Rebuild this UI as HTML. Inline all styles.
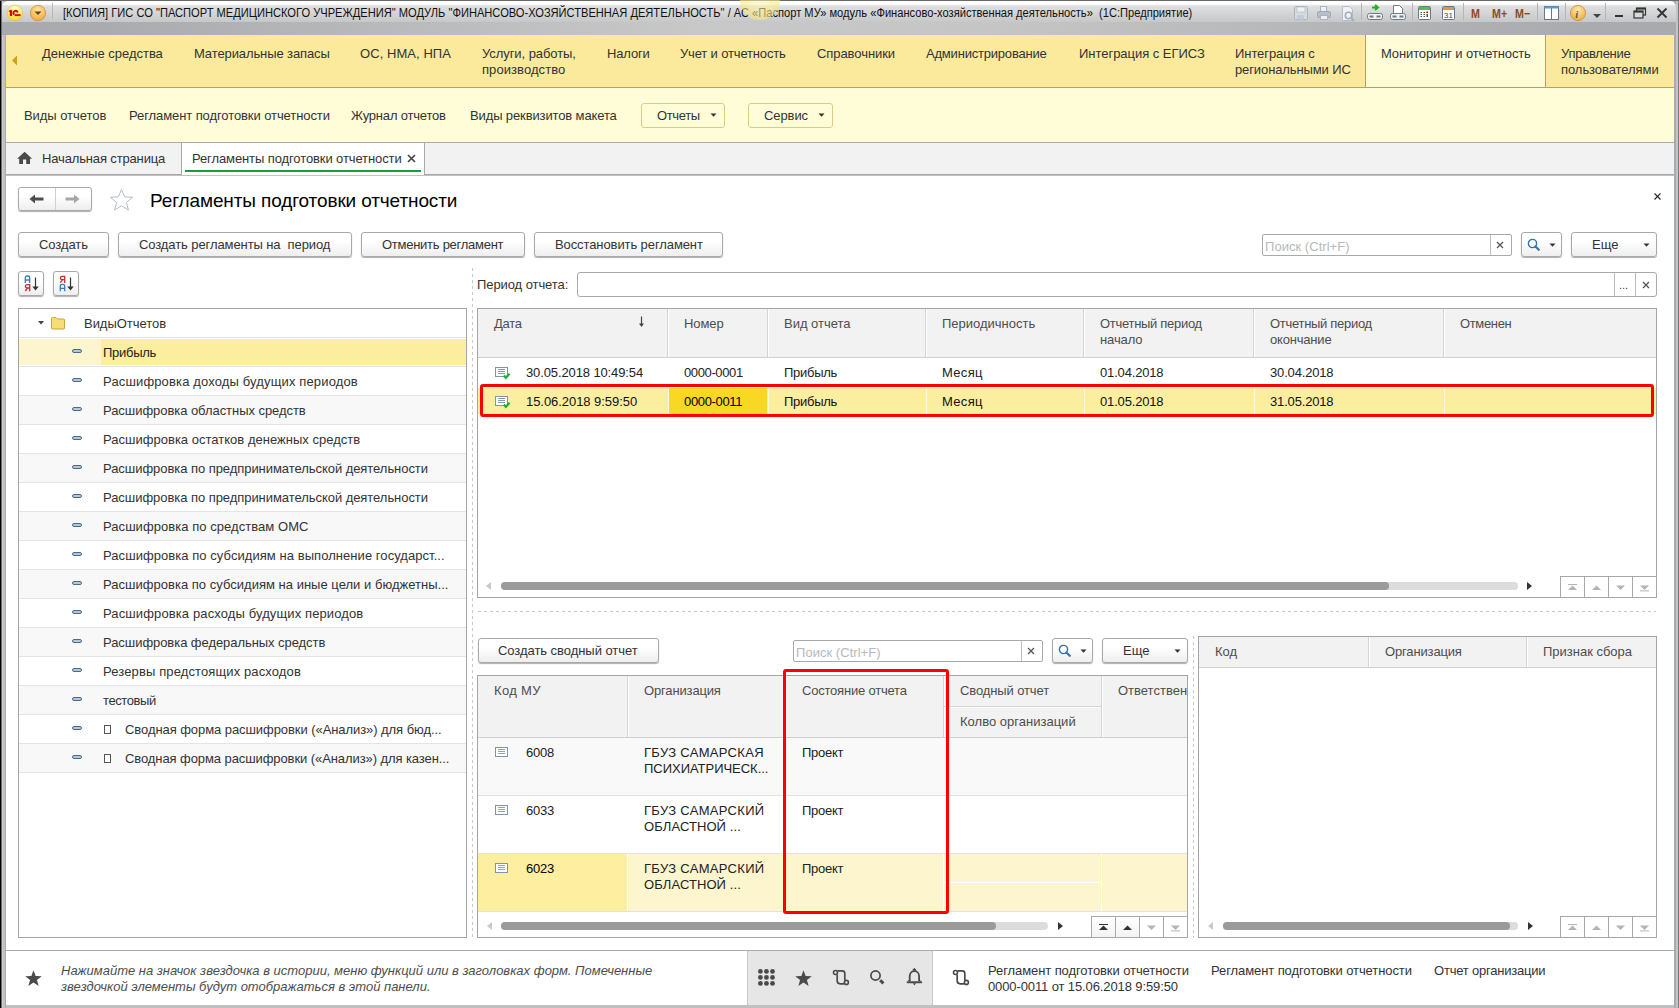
<!DOCTYPE html><html><head><meta charset="utf-8"><title>1C</title><style>
*{margin:0;padding:0;box-sizing:border-box}
html,body{width:1679px;height:1008px;overflow:hidden;background:#fff;font-family:"Liberation Sans",sans-serif}
.t{position:absolute;white-space:nowrap}
.btn{position:absolute;border:1px solid #a9a9a9;border-radius:3px;background:linear-gradient(#fff 35%,#eeeeee);box-shadow:0 1px 1px rgba(0,0,0,.32)}
.hdr{position:absolute;background:#f2f2f2}
svg{position:absolute}
</style></head><body>
<div style="position:absolute;left:0px;top:0px;width:1679px;height:1008px;background:#bfc0c2"></div>
<div style="position:absolute;left:0px;top:0px;width:1px;height:1008px;background:#000"></div>
<div style="position:absolute;left:1px;top:0px;width:1px;height:1008px;background:#6e6e6e"></div>
<div style="position:absolute;left:2px;top:0px;width:1px;height:1008px;background:#cdcdcd"></div>
<div style="position:absolute;left:5px;top:0px;width:1px;height:1008px;background:#acacac"></div>
<div style="position:absolute;left:1674px;top:0px;width:2px;height:1008px;background:#a9aaac"></div>
<div style="position:absolute;left:1676px;top:0px;width:2px;height:1008px;background:#c3c4c5"></div>
<div style="position:absolute;left:1678px;top:0px;width:1px;height:1008px;background:#7b7b7b"></div>
<div style="position:absolute;left:0px;top:0px;width:1679px;height:1px;background:#6b6b6b"></div>
<div style="position:absolute;left:2px;top:1px;width:1674px;height:21px;background:linear-gradient(#ffffff 0px,#ffffff 3px,#dfe0e1 5px,#c6c7c9 21px);border-radius:6px 6px 0 0"></div>
<div style="position:absolute;left:2px;top:22px;width:1674px;height:13px;background:linear-gradient(90deg,#a9aaad 0px,#aaabae 100px,#b9babc 400px,#c8c8c8 700px,#c5c5c5 1000px,#b6b7b9 1300px,#aaabae 1580px,#a9aaad 1679px)"></div>
<svg style="left:4px;top:2px" width="24" height="22" viewBox="0 0 24 22"><defs><radialGradient id="g1" cx="50%" cy="25%" r="75%"><stop offset="0" stop-color="#fffbd0"/><stop offset="0.6" stop-color="#fff07a"/><stop offset="1" stop-color="#ffd800"/></radialGradient></defs><circle cx="10.9" cy="10.9" r="7.7" fill="url(#g1)" stroke="#d8c060" stroke-width="0.6"/><path d="M7 8.3V14" stroke="#e00000" stroke-width="2.4"/><path d="M5 9.6L7.6 8.1" stroke="#e00000" stroke-width="1.4"/><path d="M13.6 10.4A2.1 2.1 0 1 0 10.3 12.6" fill="none" stroke="#e00000" stroke-width="1.9"/><rect x="10.6" y="12.2" width="6" height="1.9" fill="#e00000"/></svg>
<svg style="left:29px;top:4px" width="20" height="20" viewBox="0 0 20 20"><defs><radialGradient id="g2" cx="50%" cy="30%" r="70%"><stop offset="0" stop-color="#ffe3a0"/><stop offset="1" stop-color="#f5a93a"/></radialGradient></defs><circle cx="9" cy="9" r="7.7" fill="url(#g2)" stroke="#c98a2a" stroke-width="0.7"/><path d="M5.5 7.5 h7 l-3.5 3.5z" fill="#5a4520"/></svg>
<div style="position:absolute;left:52px;top:3px;width:1px;height:16px;background:#b8b8b8"></div>
<div class="t" style="left:63px;top:7px;font-size:12px;line-height:12px;color:#111;transform:scaleX(0.9267);transform-origin:0 0">[КОПИЯ] ГИС СО "ПАСПОРТ МЕДИЦИНСКОГО УЧРЕЖДЕНИЯ" МОДУЛЬ "ФИНАНСОВО-ХОЗЯЙСТВЕННАЯ ДЕЯТЕЛЬНОСТЬ" / АС «Паспорт МУ» модуль «Финансово-хозяйственная деятельность»&nbsp; (1С:Предприятие)</div>
<svg style="left:1293px;top:5px" width="16" height="16" viewBox="0 0 16 16"><rect x="1.5" y="1.5" width="13" height="13" rx="1" fill="#d6dbe2" stroke="#aab4bf"/><rect x="4" y="2" width="8" height="5" fill="#eef1f4" stroke="#aab4bf" stroke-width=".6"/><rect x="4" y="10" width="7" height="4.5" fill="#c4ccd5"/></svg>
<svg style="left:1316px;top:5px" width="16" height="16" viewBox="0 0 16 16"><rect x="4.5" y="1.5" width="6" height="5" fill="#eef0f3" stroke="#aab4bf"/><rect x="1.5" y="6.5" width="13" height="6" rx="1.5" fill="#b7c0ca" stroke="#9ea9b5"/><rect x="4.5" y="10.5" width="7" height="4" fill="#eef0f3" stroke="#aab4bf"/></svg>
<svg style="left:1340px;top:5px" width="16" height="18" viewBox="0 0 16 18"><path d="M2.5 1.5h7l3 3v11h-10z" fill="#f0f2f5" stroke="#b3bcc6"/><circle cx="8.5" cy="10.5" r="3.2" fill="none" stroke="#a4aeb9" stroke-width="1.6"/><path d="M11 13l3 3" stroke="#a4aeb9" stroke-width="1.8"/></svg>
<svg style="left:1366px;top:4px" width="18" height="17" viewBox="0 0 18 17"><path d="M6 3.5h5 M9 1l3 2.5-3 2.5" stroke="#1fb31f" stroke-width="2" fill="none"/><rect x="1.5" y="9.5" width="15" height="6" rx="2" fill="#f2f2f2" stroke="#707a85"/><rect x="3.5" y="11.5" width="4" height="2" fill="#707a85"/><rect x="10.5" y="11.5" width="4" height="2" fill="#707a85"/></svg>
<svg style="left:1389px;top:4px" width="18" height="17" viewBox="0 0 18 17"><path d="M4.5 1.5h6l3 3v5h-9z" fill="#fff" stroke="#707a85"/><rect x="1.5" y="9.5" width="15" height="6" rx="2" fill="#f2f2f2" stroke="#707a85"/><rect x="3.5" y="11.5" width="4" height="2" fill="#707a85"/><rect x="10.5" y="11.5" width="4" height="2" fill="#707a85"/></svg>
<svg style="left:1417px;top:5px" width="15" height="16" viewBox="0 0 15 16"><rect x="1.5" y="1.5" width="12" height="13" rx="1" fill="#fff" stroke="#6d7782"/><rect x="2" y="2" width="11" height="3" fill="#4cc44c"/><g fill="#555"><rect x="3.5" y="7" width="1.5" height="1"/><rect x="6.5" y="7" width="1.5" height="1"/><rect x="9.5" y="7" width="1.5" height="1"/><rect x="3.5" y="9" width="1.5" height="1"/><rect x="6.5" y="9" width="1.5" height="1"/><rect x="3.5" y="11" width="1.5" height="1"/><rect x="6.5" y="11" width="1.5" height="1"/><rect x="9.5" y="9" width="1.5" height="3"/></g><rect x="9.5" y="6.5" width="1.5" height="1.5" fill="#d00"/></svg>
<svg style="left:1441px;top:4px" width="15" height="17" viewBox="0 0 15 17"><rect x="1.5" y="2.5" width="12" height="13" rx="1" fill="#fff" stroke="#6d7782"/><rect x="2" y="3" width="11" height="3" fill="#d9925a"/><text x="3" y="14" font-family="Liberation Sans" font-size="8" fill="#444">31</text></svg>
<div style="position:absolute;left:1361px;top:3px;width:1px;height:17px;background:#b5b5b5"></div>
<div style="position:absolute;left:1412px;top:3px;width:1px;height:17px;background:#b5b5b5"></div>
<div style="position:absolute;left:1463px;top:3px;width:1px;height:17px;background:#b5b5b5"></div>
<div style="position:absolute;left:1537px;top:3px;width:1px;height:17px;background:#b5b5b5"></div>
<div style="position:absolute;left:1565px;top:3px;width:1px;height:17px;background:#b5b5b5"></div>
<div style="position:absolute;left:1605px;top:3px;width:1px;height:17px;background:#b5b5b5"></div>
<div class="t" style="left:1471px;top:7px;font-size:13px;line-height:13px;color:#8a4b1e;font-weight:bold;transform:scaleX(0.82);transform-origin:0 0">M</div>
<div class="t" style="left:1492px;top:7px;font-size:13px;line-height:13px;color:#8a4b1e;font-weight:bold;transform:scaleX(0.82);transform-origin:0 0">M+</div>
<div class="t" style="left:1515px;top:7px;font-size:13px;line-height:13px;color:#8a4b1e;font-weight:bold;transform:scaleX(0.82);transform-origin:0 0">M−</div>
<svg style="left:1543px;top:5px" width="17" height="16" viewBox="0 0 17 16"><rect x="1.5" y="1.5" width="14" height="13" fill="#fff" stroke="#6d7782"/><rect x="1.5" y="1.5" width="14" height="2" fill="#4aa0e6"/><path d="M8.5 3v11" stroke="#6d7782"/></svg>
<svg style="left:1569px;top:4px" width="18" height="18" viewBox="0 0 18 18"><defs><radialGradient id="g3" cx="50%" cy="30%" r="70%"><stop offset="0" stop-color="#ffe7b0"/><stop offset="1" stop-color="#f0ad3a"/></radialGradient></defs><circle cx="9" cy="9" r="7.6" fill="url(#g3)" stroke="#c8902c" stroke-width=".8"/><text x="6.2" y="13.5" font-family="Liberation Serif" font-style="italic" font-weight="bold" font-size="11" fill="#6a5a3a">i</text></svg>
<svg style="left:1592px;top:13px" width="10" height="6" viewBox="0 0 10 6"><path d="M1 1h8l-4 4z" fill="#444"/></svg>
<div style="position:absolute;left:1615px;top:15px;width:8px;height:2px;background:#333"></div>
<svg style="left:1633px;top:7px" width="14" height="12" viewBox="0 0 14 12"><rect x="3.5" y="1" width="9" height="7" fill="none" stroke="#333" stroke-width="1.2"/><rect x="1" y="4" width="9" height="7" fill="#d8d9db" stroke="#333" stroke-width="1.2"/><rect x="1" y="4" width="9" height="1.6" fill="#333"/><rect x="3.5" y="1" width="9" height="1.6" fill="#333"/></svg>
<svg style="left:1656px;top:7px" width="12" height="12" viewBox="0 0 12 12"><path d="M1.5 1.5l9 9M10.5 1.5l-9 9" stroke="#333" stroke-width="1.8"/></svg>
<div style="position:absolute;left:6px;top:35px;width:1668px;height:53px;background:#fbea9c;border-bottom:1px solid #c5a51e"></div>
<svg style="left:11px;top:55px" width="7" height="11" viewBox="0 0 7 11"><path d="M6 0.5v10l-5-5z" fill="#c9a41a"/></svg>
<div style="position:absolute;left:1365px;top:35px;width:181px;height:52px;background:#fffdd8;border-left:1px solid #c5a51e;border-right:1px solid #c5a51e"></div>
<div class="t" style="left:42px;top:47px;font-size:13px;line-height:13px;color:#333;letter-spacing:-0.013px;">Денежные средства</div>
<div class="t" style="left:194px;top:47px;font-size:13px;line-height:13px;color:#333;letter-spacing:-0.106px;">Материальные запасы</div>
<div class="t" style="left:360px;top:47px;font-size:13px;line-height:13px;color:#333;letter-spacing:0.064px;">ОС, НМА, НПА</div>
<div class="t" style="left:482px;top:47px;font-size:13px;line-height:13px;color:#333;letter-spacing:-0.071px;">Услуги, работы,</div>
<div class="t" style="left:482px;top:63px;font-size:13px;line-height:13px;color:#333;letter-spacing:0.073px;">производство</div>
<div class="t" style="left:607px;top:47px;font-size:13px;line-height:13px;color:#333;letter-spacing:-0.14px;">Налоги</div>
<div class="t" style="left:680px;top:47px;font-size:13px;line-height:13px;color:#333;letter-spacing:-0.156px;">Учет и отчетность</div>
<div class="t" style="left:817px;top:47px;font-size:13px;line-height:13px;color:#333;letter-spacing:-0.07px;">Справочники</div>
<div class="t" style="left:926px;top:47px;font-size:13px;line-height:13px;color:#333;letter-spacing:-0.2px;">Администрирование</div>
<div class="t" style="left:1079px;top:47px;font-size:13px;line-height:13px;color:#333;letter-spacing:-0.029px;">Интеграция с ЕГИСЗ</div>
<div class="t" style="left:1235px;top:47px;font-size:13px;line-height:13px;color:#333;letter-spacing:-0.073px;">Интеграция с</div>
<div class="t" style="left:1235px;top:63px;font-size:13px;line-height:13px;color:#333;letter-spacing:-0.113px;">региональными ИС</div>
<div class="t" style="left:1381px;top:47px;font-size:13px;line-height:13px;color:#333;letter-spacing:-0.127px;">Мониторинг и отчетность</div>
<div class="t" style="left:1561px;top:47px;font-size:13px;line-height:13px;color:#333;letter-spacing:-0.289px;">Управление</div>
<div class="t" style="left:1561px;top:63px;font-size:13px;line-height:13px;color:#333;letter-spacing:-0.062px;">пользователями</div>
<div style="position:absolute;left:6px;top:88px;width:1668px;height:55px;background:#fffdd8;border-bottom:1px solid #a9a9a9"></div>
<div class="t" style="left:24px;top:109px;font-size:13px;line-height:13px;color:#333;letter-spacing:-0.055px;">Виды отчетов</div>
<div class="t" style="left:129px;top:109px;font-size:13px;line-height:13px;color:#333;letter-spacing:-0.087px;">Регламент подготовки отчетности</div>
<div class="t" style="left:351px;top:109px;font-size:13px;line-height:13px;color:#333;letter-spacing:-0.192px;">Журнал отчетов</div>
<div class="t" style="left:470px;top:109px;font-size:13px;line-height:13px;color:#333;letter-spacing:-0.124px;">Виды реквизитов макета</div>
<div style="position:absolute;left:641px;top:103px;width:84px;height:25px;border:1px solid #dccb86;border-radius:3px;background:#fffdd8"></div>
<div class="t" style="left:657px;top:109px;font-size:13px;line-height:13px;color:#333;letter-spacing:-0.36px;">Отчеты</div>
<svg style="left:710px;top:113px" width="7" height="4" viewBox="0 0 7 4"><path d="M0.5 0.5h6l-3 3.2z" fill="#333"/></svg>
<div style="position:absolute;left:748px;top:103px;width:85px;height:25px;border:1px solid #dccb86;border-radius:3px;background:#fffdd8"></div>
<div class="t" style="left:764px;top:109px;font-size:13px;line-height:13px;color:#333;letter-spacing:-0.08px;">Сервис</div>
<svg style="left:818px;top:113px" width="7" height="4" viewBox="0 0 7 4"><path d="M0.5 0.5h6l-3 3.2z" fill="#333"/></svg>
<div style="position:absolute;left:6px;top:143px;width:1668px;height:32px;background:#f2f2f2;border-bottom:1px solid #a9a9a9"></div>
<svg style="left:17px;top:151px" width="16" height="14" viewBox="0 0 16 14"><path d="M7.6 0.7L15.1 7.8H13V13H9.2V8.4H6V13H2.2V7.8H0.1Z" fill="#4a4a4a"/></svg>
<div class="t" style="left:42px;top:152px;font-size:13px;line-height:13px;color:#333;letter-spacing:-0.147px;">Начальная страница</div>
<div style="position:absolute;left:181px;top:143px;width:244px;height:32px;background:#fff;border-left:1px solid #a9a9a9;border-right:1px solid #a9a9a9"></div>
<div style="position:absolute;left:185px;top:170px;width:236px;height:2px;background:#1b9b3a"></div>
<div class="t" style="left:192px;top:152px;font-size:13px;line-height:13px;color:#333;letter-spacing:-0.103px;">Регламенты подготовки отчетности</div>
<svg style="left:407px;top:154px" width="9" height="9" viewBox="0 0 9 9"><path d="M1 1l7 7M8 1l-7 7" stroke="#444" stroke-width="1.6"/></svg>
<div style="position:absolute;left:6px;top:176px;width:1668px;height:775px;background:#fff"></div>
<div class="btn" style="left:18px;top:187px;width:74px;height:24px"></div>
<div style="position:absolute;left:55px;top:188px;width:1px;height:22px;background:#d0d0d0"></div>
<svg style="left:29px;top:194px" width="16" height="10" viewBox="0 0 16 10"><path d="M0.5 5L6 0.5v3h8.5v3H6v3z" fill="#4d4d4d"/></svg>
<svg style="left:64px;top:194px" width="16" height="10" viewBox="0 0 16 10"><path d="M15.5 5L10 0.5v3H1.5v3H10v3z" fill="#a6a6a6"/></svg>
<svg style="left:109px;top:188px" width="25" height="24" viewBox="0 0 25 24"><path d="M12.5 1.5l3.1 7.3 7.9 0.5-6.1 5.1 2 7.7-6.9-4.3-6.9 4.3 2-7.7-6.1-5.1 7.9-0.5z" fill="none" stroke="#b4bcc4" stroke-width="1"/></svg>
<div class="t" style="left:150px;top:191px;font-size:19px;line-height:19px;color:#000;letter-spacing:-0.12px">Регламенты подготовки отчетности</div>
<svg style="left:1653px;top:192px" width="9" height="9" viewBox="0 0 9 9"><path d="M1.5 1.3l6 6.2M7.5 1.3l-6 6.2" stroke="#222" stroke-width="1.15"/></svg>
<div class="btn" style="left:18px;top:232px;width:91px;height:25px"></div>
<div class="t" style="left:39px;top:238px;font-size:13px;line-height:13px;color:#333;letter-spacing:-0.083px;">Создать</div>
<div class="btn" style="left:118px;top:232px;width:234px;height:25px"></div>
<div class="t" style="left:139px;top:238px;font-size:13px;line-height:13px;color:#333;letter-spacing:-0.091px;">Создать регламенты на&nbsp; период</div>
<div class="btn" style="left:361px;top:232px;width:164px;height:25px"></div>
<div class="t" style="left:382px;top:238px;font-size:13px;line-height:13px;color:#333;letter-spacing:-0.265px;">Отменить регламент</div>
<div class="btn" style="left:534px;top:232px;width:189px;height:25px"></div>
<div class="t" style="left:555px;top:238px;font-size:13px;line-height:13px;color:#333;letter-spacing:-0.095px;">Восстановить регламент</div>
<div style="position:absolute;left:1262px;top:234px;width:250px;height:22px;border:1px solid #aaa;border-radius:2px;background:#fff"></div>
<div style="position:absolute;left:1490px;top:235px;width:1px;height:20px;background:#bbb"></div>
<div class="t" style="left:1265px;top:240px;font-size:13px;line-height:13px;color:#b8b8b8;letter-spacing:0.038px;">Поиск (Ctrl+F)</div>
<svg style="left:1496px;top:241px" width="8" height="8" viewBox="0 0 8 8"><path d="M1 1l6 6M7 1l-6 6" stroke="#555" stroke-width="1.3"/></svg>
<div class="btn" style="left:1521px;top:232px;width:41px;height:25px"></div>
<svg style="left:1527px;top:237px" width="14" height="14" viewBox="0 0 14 14"><circle cx="5.5" cy="6.5" r="4.1" fill="none" stroke="#2f74aa" stroke-width="1.4"/><path d="M8.4 9.4l3.4 3.4" stroke="#2f74aa" stroke-width="2.1" stroke-linecap="round"/></svg>
<svg style="left:1549px;top:243px" width="7" height="4" viewBox="0 0 7 4"><path d="M0.5 0.5h6l-3 3.2z" fill="#333"/></svg>
<div class="btn" style="left:1571px;top:232px;width:86px;height:25px"></div>
<div class="t" style="left:1592px;top:238px;font-size:13px;line-height:13px;color:#333;">Еще</div>
<svg style="left:1643px;top:243px" width="7" height="4" viewBox="0 0 7 4"><path d="M0.5 0.5h6l-3 3.2z" fill="#333"/></svg>
<div class="btn" style="left:18px;top:271px;width:26px;height:25px"></div>
<svg style="left:24px;top:275px" width="16" height="18" viewBox="0 0 16 18"><g transform="translate(0.5,0.5)"><path d="M0.8 7.5V2.3a1.8 1.8 0 0 1 1.8-1.8h0.8a1.8 1.8 0 0 1 1.8 1.8V7.5M0.8 4.5h4.4" fill="none" stroke="#2f7cc4" stroke-width="1.3"/></g><g transform="translate(0.5,8.8)"><path d="M5.2 7.5V0.8H2.6a1.7 1.7 0 0 0 0 3.4h2.6M3 4.4L0.8 7.2" fill="none" stroke="#c0302a" stroke-width="1.3"/></g><path d="M11.5 2.5v11" stroke="#333" stroke-width="1.2"/><path d="M8.3 11.5h6.4l-3.2 4z" fill="#333"/></svg>
<div class="btn" style="left:53px;top:271px;width:26px;height:25px"></div>
<svg style="left:59px;top:275px" width="16" height="18" viewBox="0 0 16 18"><g transform="translate(0.5,0.5)"><path d="M5.2 7.5V0.8H2.6a1.7 1.7 0 0 0 0 3.4h2.6M3 4.4L0.8 7.2" fill="none" stroke="#c0302a" stroke-width="1.3"/></g><g transform="translate(0.5,8.8)"><path d="M0.8 7.5V2.3a1.8 1.8 0 0 1 1.8-1.8h0.8a1.8 1.8 0 0 1 1.8 1.8V7.5M0.8 4.5h4.4" fill="none" stroke="#2f7cc4" stroke-width="1.3"/></g><path d="M11.5 2.5v11" stroke="#333" stroke-width="1.2"/><path d="M8.3 11.5h6.4l-3.2 4z" fill="#333"/></svg>
<svg style="left:472px;top:268px" width="1" height="670"><line x1="0.5" y1="0" x2="0.5" y2="670" stroke="#c8c8c8" stroke-width="1" stroke-dasharray="3 3"/></svg>
<svg style="left:478px;top:611px" width="1178" height="1"><line x1="0" y1="0.5" x2="1178" y2="0.5" stroke="#c8c8c8" stroke-width="1" stroke-dasharray="3 3"/></svg>
<svg style="left:1193px;top:636px" width="1" height="302"><line x1="0.5" y1="0" x2="0.5" y2="302" stroke="#c8c8c8" stroke-width="1" stroke-dasharray="3 3"/></svg>
<div style="position:absolute;left:18px;top:308px;width:449px;height:630px;border:1px solid #a5a5a5;background:#fff"></div>
<svg style="left:38px;top:321px" width="6" height="4" viewBox="0 0 6 4"><path d="M0 0h6l-3 3.5z" fill="#444"/></svg>
<svg style="left:50px;top:316px" width="16" height="14" viewBox="0 0 16 14"><path d="M1.5 2.5a1 1 0 0 1 1-1h3.5l1.5 1.5h6a1 1 0 0 1 1 1v8a1 1 0 0 1-1 1h-11a1 1 0 0 1-1-1z" fill="#f7dc7a" stroke="#c9a43a"/></svg>
<div class="t" style="left:84px;top:317px;font-size:13px;line-height:13px;color:#333;letter-spacing:-0.04px;">ВидыОтчетов</div>
<div style="position:absolute;left:19px;top:337px;width:447px;height:1px;background:#e4e4e4"></div>
<div style="position:absolute;left:19px;top:339px;width:447px;height:26px;background:#fcf5cd"></div>
<div style="position:absolute;left:101px;top:339px;width:365px;height:26px;background:#fcee9f"></div>
<div style="position:absolute;left:19px;top:366px;width:447px;height:1px;background:#e4e4e4"></div>
<svg style="left:72px;top:349px" width="10" height="4" viewBox="0 0 10 4"><rect x="0.5" y="0.5" width="9" height="3" rx="1.5" fill="#b4c8da" stroke="#4a6a88" stroke-width="1"/></svg>
<div class="t" style="left:103px;top:346px;font-size:13px;line-height:13px;color:#222;letter-spacing:-0.267px;">Прибыль</div>
<div style="position:absolute;left:19px;top:395px;width:447px;height:1px;background:#e4e4e4"></div>
<svg style="left:72px;top:378px" width="10" height="4" viewBox="0 0 10 4"><rect x="0.5" y="0.5" width="9" height="3" rx="1.5" fill="#b4c8da" stroke="#4a6a88" stroke-width="1"/></svg>
<div class="t" style="left:103px;top:375px;font-size:13px;line-height:13px;color:#333;letter-spacing:0.144px;">Расшифровка доходы будущих периодов</div>
<div style="position:absolute;left:19px;top:396px;width:447px;height:28px;background:#f8f8f8"></div>
<div style="position:absolute;left:19px;top:424px;width:447px;height:1px;background:#e4e4e4"></div>
<svg style="left:72px;top:407px" width="10" height="4" viewBox="0 0 10 4"><rect x="0.5" y="0.5" width="9" height="3" rx="1.5" fill="#b4c8da" stroke="#4a6a88" stroke-width="1"/></svg>
<div class="t" style="left:103px;top:404px;font-size:13px;line-height:13px;color:#333;letter-spacing:-0.05px;">Расшифровка областных средств</div>
<div style="position:absolute;left:19px;top:453px;width:447px;height:1px;background:#e4e4e4"></div>
<svg style="left:72px;top:436px" width="10" height="4" viewBox="0 0 10 4"><rect x="0.5" y="0.5" width="9" height="3" rx="1.5" fill="#b4c8da" stroke="#4a6a88" stroke-width="1"/></svg>
<div class="t" style="left:103px;top:433px;font-size:13px;line-height:13px;color:#333;letter-spacing:0.017px;">Расшифровка остатков денежных средств</div>
<div style="position:absolute;left:19px;top:454px;width:447px;height:28px;background:#f8f8f8"></div>
<div style="position:absolute;left:19px;top:482px;width:447px;height:1px;background:#e4e4e4"></div>
<svg style="left:72px;top:465px" width="10" height="4" viewBox="0 0 10 4"><rect x="0.5" y="0.5" width="9" height="3" rx="1.5" fill="#b4c8da" stroke="#4a6a88" stroke-width="1"/></svg>
<div class="t" style="left:103px;top:462px;font-size:13px;line-height:13px;color:#333;letter-spacing:-0.052px;">Расшифровка по предпринимательской деятельности</div>
<div style="position:absolute;left:19px;top:511px;width:447px;height:1px;background:#e4e4e4"></div>
<svg style="left:72px;top:494px" width="10" height="4" viewBox="0 0 10 4"><rect x="0.5" y="0.5" width="9" height="3" rx="1.5" fill="#b4c8da" stroke="#4a6a88" stroke-width="1"/></svg>
<div class="t" style="left:103px;top:491px;font-size:13px;line-height:13px;color:#333;letter-spacing:-0.052px;">Расшифровка по предпринимательской деятельности</div>
<div style="position:absolute;left:19px;top:512px;width:447px;height:28px;background:#f8f8f8"></div>
<div style="position:absolute;left:19px;top:540px;width:447px;height:1px;background:#e4e4e4"></div>
<svg style="left:72px;top:523px" width="10" height="4" viewBox="0 0 10 4"><rect x="0.5" y="0.5" width="9" height="3" rx="1.5" fill="#b4c8da" stroke="#4a6a88" stroke-width="1"/></svg>
<div class="t" style="left:103px;top:520px;font-size:13px;line-height:13px;color:#333;letter-spacing:0.052px;">Расшифровка по средствам ОМС</div>
<div style="position:absolute;left:19px;top:569px;width:447px;height:1px;background:#e4e4e4"></div>
<svg style="left:72px;top:552px" width="10" height="4" viewBox="0 0 10 4"><rect x="0.5" y="0.5" width="9" height="3" rx="1.5" fill="#b4c8da" stroke="#4a6a88" stroke-width="1"/></svg>
<div class="t" style="left:103px;top:549px;font-size:13px;line-height:13px;color:#333;letter-spacing:0.058px;">Расшифровка по субсидиям на выполнение государст...</div>
<div style="position:absolute;left:19px;top:570px;width:447px;height:28px;background:#f8f8f8"></div>
<div style="position:absolute;left:19px;top:598px;width:447px;height:1px;background:#e4e4e4"></div>
<svg style="left:72px;top:581px" width="10" height="4" viewBox="0 0 10 4"><rect x="0.5" y="0.5" width="9" height="3" rx="1.5" fill="#b4c8da" stroke="#4a6a88" stroke-width="1"/></svg>
<div class="t" style="left:103px;top:578px;font-size:13px;line-height:13px;color:#333;letter-spacing:0.02px;">Расшифровка по субсидиям на иные цели и бюджетны...</div>
<div style="position:absolute;left:19px;top:627px;width:447px;height:1px;background:#e4e4e4"></div>
<svg style="left:72px;top:610px" width="10" height="4" viewBox="0 0 10 4"><rect x="0.5" y="0.5" width="9" height="3" rx="1.5" fill="#b4c8da" stroke="#4a6a88" stroke-width="1"/></svg>
<div class="t" style="left:103px;top:607px;font-size:13px;line-height:13px;color:#333;letter-spacing:0.117px;">Расшифровка расходы будущих периодов</div>
<div style="position:absolute;left:19px;top:628px;width:447px;height:28px;background:#f8f8f8"></div>
<div style="position:absolute;left:19px;top:656px;width:447px;height:1px;background:#e4e4e4"></div>
<svg style="left:72px;top:639px" width="10" height="4" viewBox="0 0 10 4"><rect x="0.5" y="0.5" width="9" height="3" rx="1.5" fill="#b4c8da" stroke="#4a6a88" stroke-width="1"/></svg>
<div class="t" style="left:103px;top:636px;font-size:13px;line-height:13px;color:#333;letter-spacing:-0.057px;">Расшифровка федеральных средств</div>
<div style="position:absolute;left:19px;top:685px;width:447px;height:1px;background:#e4e4e4"></div>
<svg style="left:72px;top:668px" width="10" height="4" viewBox="0 0 10 4"><rect x="0.5" y="0.5" width="9" height="3" rx="1.5" fill="#b4c8da" stroke="#4a6a88" stroke-width="1"/></svg>
<div class="t" style="left:103px;top:665px;font-size:13px;line-height:13px;color:#333;letter-spacing:0.119px;">Резервы предстоящих расходов</div>
<div style="position:absolute;left:19px;top:686px;width:447px;height:28px;background:#f8f8f8"></div>
<div style="position:absolute;left:19px;top:714px;width:447px;height:1px;background:#e4e4e4"></div>
<svg style="left:72px;top:697px" width="10" height="4" viewBox="0 0 10 4"><rect x="0.5" y="0.5" width="9" height="3" rx="1.5" fill="#b4c8da" stroke="#4a6a88" stroke-width="1"/></svg>
<div class="t" style="left:103px;top:694px;font-size:13px;line-height:13px;color:#333;letter-spacing:-0.414px;">тестовый</div>
<div style="position:absolute;left:19px;top:743px;width:447px;height:1px;background:#e4e4e4"></div>
<svg style="left:72px;top:726px" width="10" height="4" viewBox="0 0 10 4"><rect x="0.5" y="0.5" width="9" height="3" rx="1.5" fill="#b4c8da" stroke="#4a6a88" stroke-width="1"/></svg>
<div style="position:absolute;left:104px;top:725px;width:7px;height:9px;border:1px solid #555;background:#fff"></div>
<div class="t" style="left:125px;top:723px;font-size:13px;line-height:13px;color:#333;letter-spacing:-0.067px;">Сводная форма расшифровки («Анализ») для бюд...</div>
<div style="position:absolute;left:19px;top:744px;width:447px;height:28px;background:#f8f8f8"></div>
<div style="position:absolute;left:19px;top:772px;width:447px;height:1px;background:#e4e4e4"></div>
<svg style="left:72px;top:755px" width="10" height="4" viewBox="0 0 10 4"><rect x="0.5" y="0.5" width="9" height="3" rx="1.5" fill="#b4c8da" stroke="#4a6a88" stroke-width="1"/></svg>
<div style="position:absolute;left:104px;top:754px;width:7px;height:9px;border:1px solid #555;background:#fff"></div>
<div class="t" style="left:125px;top:752px;font-size:13px;line-height:13px;color:#333;letter-spacing:-0.085px;">Сводная форма расшифровки («Анализ») для казен...</div>
<div class="t" style="left:477px;top:278px;font-size:13px;line-height:13px;color:#333;letter-spacing:-0.077px;">Период отчета:</div>
<div style="position:absolute;left:577px;top:272px;width:1080px;height:25px;border:1px solid #aaa;border-radius:3px;background:#fff"></div>
<div style="position:absolute;left:1614px;top:273px;width:1px;height:23px;background:#bbb"></div>
<div style="position:absolute;left:1635px;top:273px;width:1px;height:23px;background:#bbb"></div>
<div class="t" style="left:1619px;top:280px;font-size:11px;line-height:11px;color:#444;">...</div>
<svg style="left:1642px;top:281px" width="8" height="8" viewBox="0 0 8 8"><path d="M1 1l6 6M7 1l-6 6" stroke="#555" stroke-width="1.3"/></svg>
<div style="position:absolute;left:477px;top:308px;width:1180px;height:290px;border:1px solid #a5a5a5;background:#fff"></div>
<div style="position:absolute;left:478px;top:309px;width:1178px;height:49px;background:#f2f2f2;border-bottom:1px solid #d0d0d0"></div>
<div style="position:absolute;left:667px;top:309px;width:1px;height:48px;background:#d4d4d4"></div>
<div style="position:absolute;left:668px;top:309px;width:1px;height:48px;background:#fff"></div>
<div style="position:absolute;left:767px;top:309px;width:1px;height:48px;background:#d4d4d4"></div>
<div style="position:absolute;left:768px;top:309px;width:1px;height:48px;background:#fff"></div>
<div style="position:absolute;left:925px;top:309px;width:1px;height:48px;background:#d4d4d4"></div>
<div style="position:absolute;left:926px;top:309px;width:1px;height:48px;background:#fff"></div>
<div style="position:absolute;left:1083px;top:309px;width:1px;height:48px;background:#d4d4d4"></div>
<div style="position:absolute;left:1084px;top:309px;width:1px;height:48px;background:#fff"></div>
<div style="position:absolute;left:1253px;top:309px;width:1px;height:48px;background:#d4d4d4"></div>
<div style="position:absolute;left:1254px;top:309px;width:1px;height:48px;background:#fff"></div>
<div style="position:absolute;left:1443px;top:309px;width:1px;height:48px;background:#d4d4d4"></div>
<div style="position:absolute;left:1444px;top:309px;width:1px;height:48px;background:#fff"></div>
<div class="t" style="left:494px;top:317px;font-size:13px;line-height:13px;color:#4d4d4d;letter-spacing:-0.267px;">Дата</div>
<svg style="left:638px;top:316px" width="7" height="12" viewBox="0 0 7 12"><path d="M3.5 0.5v9" stroke="#444" stroke-width="1.2"/><path d="M1 7.5h5l-2.5 3.5z" fill="#444"/></svg>
<div class="t" style="left:684px;top:317px;font-size:13px;line-height:13px;color:#4d4d4d;letter-spacing:-0.1px;">Номер</div>
<div class="t" style="left:784px;top:317px;font-size:13px;line-height:13px;color:#4d4d4d;letter-spacing:-0.022px;">Вид отчета</div>
<div class="t" style="left:942px;top:317px;font-size:13px;line-height:13px;color:#4d4d4d;letter-spacing:-0.008px;">Периодичность</div>
<div class="t" style="left:1100px;top:317px;font-size:13px;line-height:13px;color:#4d4d4d;letter-spacing:-0.293px;">Отчетный период</div>
<div class="t" style="left:1100px;top:333px;font-size:13px;line-height:13px;color:#4d4d4d;letter-spacing:-0.1px;">начало</div>
<div class="t" style="left:1270px;top:317px;font-size:13px;line-height:13px;color:#4d4d4d;letter-spacing:-0.293px;">Отчетный период</div>
<div class="t" style="left:1270px;top:333px;font-size:13px;line-height:13px;color:#4d4d4d;letter-spacing:-0.188px;">окончание</div>
<div class="t" style="left:1460px;top:317px;font-size:13px;line-height:13px;color:#4d4d4d;letter-spacing:-0.35px;">Отменен</div>
<svg style="left:495px;top:367px" width="17" height="13" viewBox="0 0 17 13"><rect x="0.5" y="0.5" width="12" height="9" fill="#fff" stroke="#8393a6"/><path d="M3 2.5h7M3 4.5h7M3 6.5h7" stroke="#8c99a6" stroke-width="1"/><path d="M8.8 8.6l2 2.2 3.8-4" stroke="#1fae3a" stroke-width="2.2" fill="none"/></svg>
<div class="t" style="left:526px;top:366px;font-size:13px;line-height:13px;color:#222;letter-spacing:-0.117px;">30.05.2018 10:49:54</div>
<div class="t" style="left:684px;top:366px;font-size:13px;line-height:13px;color:#222;letter-spacing:-0.375px;">0000-0001</div>
<div class="t" style="left:784px;top:366px;font-size:13px;line-height:13px;color:#222;letter-spacing:-0.267px;">Прибыль</div>
<div class="t" style="left:942px;top:366px;font-size:13px;line-height:13px;color:#222;letter-spacing:0.325px;">Месяц</div>
<div class="t" style="left:1100px;top:366px;font-size:13px;line-height:13px;color:#222;letter-spacing:-0.167px;">01.04.2018</div>
<div class="t" style="left:1270px;top:366px;font-size:13px;line-height:13px;color:#222;letter-spacing:-0.167px;">30.04.2018</div>
<div style="position:absolute;left:478px;top:387px;width:1178px;height:27px;background:#fcee9f"></div>
<div style="position:absolute;left:478px;top:387px;width:1178px;height:1px;background:#fff"></div>
<div style="position:absolute;left:668px;top:388px;width:99px;height:26px;background:#f9d824"></div>
<div style="position:absolute;left:668px;top:387px;width:1px;height:28px;background:#fffbe0"></div>
<div style="position:absolute;left:768px;top:387px;width:1px;height:28px;background:#fffbe0"></div>
<div style="position:absolute;left:926px;top:387px;width:1px;height:28px;background:#fffbe0"></div>
<div style="position:absolute;left:1084px;top:387px;width:1px;height:28px;background:#fffbe0"></div>
<div style="position:absolute;left:1254px;top:387px;width:1px;height:28px;background:#fffbe0"></div>
<div style="position:absolute;left:1444px;top:387px;width:1px;height:28px;background:#fffbe0"></div>
<svg style="left:495px;top:396px" width="17" height="13" viewBox="0 0 17 13"><rect x="0.5" y="0.5" width="12" height="9" fill="#fff" stroke="#8393a6"/><path d="M3 2.5h7M3 4.5h7M3 6.5h7" stroke="#8c99a6" stroke-width="1"/><path d="M8.8 8.6l2 2.2 3.8-4" stroke="#1fae3a" stroke-width="2.2" fill="none"/></svg>
<div class="t" style="left:526px;top:395px;font-size:13px;line-height:13px;color:#111;letter-spacing:-0.053px;">15.06.2018 9:59:50</div>
<div class="t" style="left:684px;top:395px;font-size:13px;line-height:13px;color:#000;letter-spacing:-0.338px;">0000-0011</div>
<div class="t" style="left:784px;top:395px;font-size:13px;line-height:13px;color:#111;letter-spacing:-0.267px;">Прибыль</div>
<div class="t" style="left:942px;top:395px;font-size:13px;line-height:13px;color:#111;letter-spacing:0.325px;">Месяц</div>
<div class="t" style="left:1100px;top:395px;font-size:13px;line-height:13px;color:#111;letter-spacing:-0.167px;">01.05.2018</div>
<div class="t" style="left:1270px;top:395px;font-size:13px;line-height:13px;color:#111;letter-spacing:-0.167px;">31.05.2018</div>
<div style="position:absolute;left:480px;top:384px;width:1174px;height:33px;border:3px solid #ff0000;border-radius:3px"></div>
<svg style="left:486px;top:582px" width="5" height="8" viewBox="0 0 5 8"><path d="M5 0v8L0 4z" fill="#c8c8c8"/></svg>
<div style="position:absolute;left:501px;top:582px;width:1017px;height:8px;background:#dcdcdc;border-radius:4px"></div>
<div style="position:absolute;left:501px;top:582px;width:888px;height:8px;background:#9a9a9a;border-radius:4px"></div>
<svg style="left:1527px;top:582px" width="5" height="8" viewBox="0 0 5 8"><path d="M0 0v8L5 4z" fill="#333"/></svg>
<div style="position:absolute;left:1560px;top:576px;width:25px;height:22px;border:1px solid #a8a8a8;background:#fff"></div>
<div style="position:absolute;left:1584px;top:576px;width:25px;height:22px;border:1px solid #a8a8a8;background:#fff"></div>
<div style="position:absolute;left:1608px;top:576px;width:25px;height:22px;border:1px solid #a8a8a8;background:#fff"></div>
<div style="position:absolute;left:1632px;top:576px;width:25px;height:22px;border:1px solid #a8a8a8;background:#fff"></div>
<svg style="left:1567px;top:584px" width="11" height="7" viewBox="0 0 11 7"><path d="M1 0.5h9" stroke="#b4b4b4" stroke-width="1"/><path d="M1 6h9L5.5 1.5z" fill="#b4b4b4"/></svg>
<svg style="left:1591px;top:585px" width="11" height="6" viewBox="0 0 11 6"><path d="M1 5h9L5.5 0.5z" fill="#b4b4b4"/></svg>
<svg style="left:1615px;top:585px" width="11" height="6" viewBox="0 0 11 6"><path d="M1 0.5h9L5.5 5z" fill="#b4b4b4"/></svg>
<svg style="left:1639px;top:585px" width="11" height="7" viewBox="0 0 11 7"><path d="M1 0.5h9L5.5 5z" fill="#b4b4b4"/><path d="M1 5.9h9" stroke="#b4b4b4" stroke-width="1"/></svg>
<div class="btn" style="left:478px;top:638px;width:181px;height:25px"></div>
<div class="t" style="left:498px;top:644px;font-size:13px;line-height:13px;color:#333;letter-spacing:-0.05px;">Создать сводный отчет</div>
<div style="position:absolute;left:793px;top:640px;width:250px;height:22px;border:1px solid #aaa;border-radius:2px;background:#fff"></div>
<div style="position:absolute;left:1021px;top:641px;width:1px;height:20px;background:#bbb"></div>
<div class="t" style="left:796px;top:646px;font-size:13px;line-height:13px;color:#b8b8b8;letter-spacing:0.038px;">Поиск (Ctrl+F)</div>
<svg style="left:1027px;top:647px" width="8" height="8" viewBox="0 0 8 8"><path d="M1 1l6 6M7 1l-6 6" stroke="#555" stroke-width="1.3"/></svg>
<div class="btn" style="left:1052px;top:638px;width:41px;height:25px"></div>
<svg style="left:1058px;top:643px" width="14" height="14" viewBox="0 0 14 14"><circle cx="5.5" cy="6.5" r="4.1" fill="none" stroke="#2f74aa" stroke-width="1.4"/><path d="M8.4 9.4l3.4 3.4" stroke="#2f74aa" stroke-width="2.1" stroke-linecap="round"/></svg>
<svg style="left:1080px;top:649px" width="7" height="4" viewBox="0 0 7 4"><path d="M0.5 0.5h6l-3 3.2z" fill="#333"/></svg>
<div class="btn" style="left:1102px;top:638px;width:86px;height:25px"></div>
<div class="t" style="left:1123px;top:644px;font-size:13px;line-height:13px;color:#333;">Еще</div>
<svg style="left:1174px;top:649px" width="7" height="4" viewBox="0 0 7 4"><path d="M0.5 0.5h6l-3 3.2z" fill="#333"/></svg>
<div style="position:absolute;left:477px;top:675px;width:711px;height:263px;border:1px solid #a5a5a5;background:#fff"></div>
<div style="position:absolute;left:478px;top:676px;width:709px;height:62px;background:#f2f2f2;border-bottom:1px solid #d0d0d0"></div>
<div style="position:absolute;left:627px;top:676px;width:1px;height:61px;background:#d4d4d4"></div>
<div style="position:absolute;left:628px;top:676px;width:1px;height:61px;background:#fff"></div>
<div style="position:absolute;left:785px;top:676px;width:1px;height:61px;background:#d4d4d4"></div>
<div style="position:absolute;left:786px;top:676px;width:1px;height:61px;background:#fff"></div>
<div style="position:absolute;left:943px;top:676px;width:1px;height:61px;background:#d4d4d4"></div>
<div style="position:absolute;left:944px;top:676px;width:1px;height:61px;background:#fff"></div>
<div style="position:absolute;left:1101px;top:676px;width:1px;height:61px;background:#d4d4d4"></div>
<div style="position:absolute;left:1102px;top:676px;width:1px;height:61px;background:#fff"></div>
<div style="position:absolute;left:944px;top:706px;width:157px;height:1px;background:#d4d4d4"></div>
<div style="position:absolute;left:944px;top:707px;width:157px;height:1px;background:#fff"></div>
<div class="t" style="left:494px;top:684px;font-size:13px;line-height:13px;color:#4d4d4d;letter-spacing:0.35px;">Код МУ</div>
<div class="t" style="left:644px;top:684px;font-size:13px;line-height:13px;color:#4d4d4d;letter-spacing:-0.15px;">Организация</div>
<div class="t" style="left:802px;top:684px;font-size:13px;line-height:13px;color:#4d4d4d;letter-spacing:-0.207px;">Состояние отчета</div>
<div class="t" style="left:960px;top:684px;font-size:13px;line-height:13px;color:#4d4d4d;letter-spacing:-0.117px;">Сводный отчет</div>
<div class="t" style="left:960px;top:715px;font-size:13px;line-height:13px;color:#4d4d4d;letter-spacing:0.013px;">Колво организаций</div>
<div class="t" style="left:1118px;top:684px;width:69px;overflow:hidden;font-size:13px;line-height:13px;color:#4d4d4d">Ответственный</div>
<div style="position:absolute;left:478px;top:738px;width:709px;height:57px;background:#f9f9f9"></div>
<div style="position:absolute;left:478px;top:795px;width:709px;height:1px;background:#e2e2e2"></div>
<svg style="left:495px;top:747px" width="15" height="11" viewBox="0 0 15 11"><rect x="0.5" y="0.5" width="12" height="9" fill="#fff" stroke="#8393a6"/><path d="M3 2.5h7M3 4.5h7M3 6.5h7" stroke="#96a2ae" stroke-width="1"/></svg>
<div class="t" style="left:526px;top:746px;font-size:13px;line-height:13px;color:#222;letter-spacing:-0.233px;">6008</div>
<div class="t" style="left:644px;top:746px;font-size:13px;line-height:13px;color:#222;letter-spacing:0.308px;">ГБУЗ САМАРСКАЯ</div>
<div class="t" style="left:644px;top:762px;font-size:13px;line-height:13px;color:#222;letter-spacing:-0.027px;">ПСИХИАТРИЧЕСК...</div>
<div class="t" style="left:802px;top:746px;font-size:13px;line-height:13px;color:#222;letter-spacing:-0.28px;">Проект</div>
<div style="position:absolute;left:478px;top:853px;width:709px;height:1px;background:#e2e2e2"></div>
<svg style="left:495px;top:805px" width="15" height="11" viewBox="0 0 15 11"><rect x="0.5" y="0.5" width="12" height="9" fill="#fff" stroke="#8393a6"/><path d="M3 2.5h7M3 4.5h7M3 6.5h7" stroke="#96a2ae" stroke-width="1"/></svg>
<div class="t" style="left:526px;top:804px;font-size:13px;line-height:13px;color:#222;letter-spacing:-0.233px;">6033</div>
<div class="t" style="left:644px;top:804px;font-size:13px;line-height:13px;color:#222;letter-spacing:0.308px;">ГБУЗ САМАРСКИЙ</div>
<div class="t" style="left:644px;top:820px;font-size:13px;line-height:13px;color:#222;letter-spacing:0.083px;">ОБЛАСТНОЙ ...</div>
<div class="t" style="left:802px;top:804px;font-size:13px;line-height:13px;color:#222;letter-spacing:-0.28px;">Проект</div>
<div style="position:absolute;left:478px;top:854px;width:709px;height:57px;background:#fcf5cd"></div>
<div style="position:absolute;left:478px;top:854px;width:149px;height:57px;background:#fdeea0"></div>
<div style="position:absolute;left:944px;top:882px;width:157px;height:1px;background:#fff"></div>
<div style="position:absolute;left:627px;top:854px;width:1px;height:57px;background:#fff"></div>
<div style="position:absolute;left:785px;top:854px;width:1px;height:57px;background:#fff"></div>
<div style="position:absolute;left:943px;top:854px;width:1px;height:57px;background:#fff"></div>
<div style="position:absolute;left:1101px;top:854px;width:1px;height:57px;background:#fff"></div>
<div style="position:absolute;left:478px;top:911px;width:709px;height:1px;background:#e2e2e2"></div>
<svg style="left:495px;top:863px" width="15" height="11" viewBox="0 0 15 11"><rect x="0.5" y="0.5" width="12" height="9" fill="#fff" stroke="#8393a6"/><path d="M3 2.5h7M3 4.5h7M3 6.5h7" stroke="#96a2ae" stroke-width="1"/></svg>
<div class="t" style="left:526px;top:862px;font-size:13px;line-height:13px;color:#000;letter-spacing:-0.233px;">6023</div>
<div class="t" style="left:644px;top:862px;font-size:13px;line-height:13px;color:#222;letter-spacing:0.308px;">ГБУЗ САМАРСКИЙ</div>
<div class="t" style="left:644px;top:878px;font-size:13px;line-height:13px;color:#222;letter-spacing:0.083px;">ОБЛАСТНОЙ ...</div>
<div class="t" style="left:802px;top:862px;font-size:13px;line-height:13px;color:#222;letter-spacing:-0.28px;">Проект</div>
<div style="position:absolute;left:783px;top:669px;width:166px;height:245px;border:3px solid #ff0000;border-radius:3px"></div>
<svg style="left:487px;top:922px" width="5" height="8" viewBox="0 0 5 8"><path d="M5 0v8L0 4z" fill="#c8c8c8"/></svg>
<div style="position:absolute;left:501px;top:922px;width:547px;height:8px;background:#dcdcdc;border-radius:4px"></div>
<div style="position:absolute;left:501px;top:922px;width:495px;height:8px;background:#9a9a9a;border-radius:4px"></div>
<svg style="left:1058px;top:922px" width="5" height="8" viewBox="0 0 5 8"><path d="M0 0v8L5 4z" fill="#333"/></svg>
<div style="position:absolute;left:1091px;top:916px;width:25px;height:22px;border:1px solid #a8a8a8;background:linear-gradient(#fff,#f3f3f3)"></div>
<div style="position:absolute;left:1115px;top:916px;width:25px;height:22px;border:1px solid #a8a8a8;background:linear-gradient(#fff,#f3f3f3)"></div>
<div style="position:absolute;left:1139px;top:916px;width:25px;height:22px;border:1px solid #a8a8a8;background:#fff"></div>
<div style="position:absolute;left:1163px;top:916px;width:25px;height:22px;border:1px solid #a8a8a8;background:#fff"></div>
<svg style="left:1098px;top:924px" width="11" height="7" viewBox="0 0 11 7"><path d="M1 0.5h9" stroke="#333" stroke-width="1"/><path d="M1 6h9L5.5 1.5z" fill="#333"/></svg>
<svg style="left:1122px;top:925px" width="11" height="6" viewBox="0 0 11 6"><path d="M1 5h9L5.5 0.5z" fill="#333"/></svg>
<svg style="left:1146px;top:925px" width="11" height="6" viewBox="0 0 11 6"><path d="M1 0.5h9L5.5 5z" fill="#b4b4b4"/></svg>
<svg style="left:1170px;top:925px" width="11" height="7" viewBox="0 0 11 7"><path d="M1 0.5h9L5.5 5z" fill="#b4b4b4"/><path d="M1 5.9h9" stroke="#b4b4b4" stroke-width="1"/></svg>
<div style="position:absolute;left:1198px;top:636px;width:459px;height:302px;border:1px solid #a5a5a5;background:#fff"></div>
<div style="position:absolute;left:1199px;top:637px;width:457px;height:31px;background:#f2f2f2;border-bottom:1px solid #d0d0d0"></div>
<div style="position:absolute;left:1368px;top:637px;width:1px;height:30px;background:#d4d4d4"></div>
<div style="position:absolute;left:1369px;top:637px;width:1px;height:30px;background:#fff"></div>
<div style="position:absolute;left:1526px;top:637px;width:1px;height:30px;background:#d4d4d4"></div>
<div style="position:absolute;left:1527px;top:637px;width:1px;height:30px;background:#fff"></div>
<div class="t" style="left:1215px;top:645px;font-size:13px;line-height:13px;color:#4d4d4d;">Код</div>
<div class="t" style="left:1385px;top:645px;font-size:13px;line-height:13px;color:#4d4d4d;letter-spacing:-0.15px;">Организация</div>
<div class="t" style="left:1543px;top:645px;font-size:13px;line-height:13px;color:#4d4d4d;letter-spacing:-0.008px;">Признак сбора</div>
<svg style="left:1208px;top:922px" width="5" height="8" viewBox="0 0 5 8"><path d="M5 0v8L0 4z" fill="#c8c8c8"/></svg>
<div style="position:absolute;left:1223px;top:922px;width:295px;height:8px;background:#dcdcdc;border-radius:4px"></div>
<div style="position:absolute;left:1223px;top:922px;width:287px;height:8px;background:#9a9a9a;border-radius:4px"></div>
<svg style="left:1528px;top:922px" width="5" height="8" viewBox="0 0 5 8"><path d="M0 0v8L5 4z" fill="#333"/></svg>
<div style="position:absolute;left:1560px;top:916px;width:25px;height:22px;border:1px solid #a8a8a8;background:#fff"></div>
<div style="position:absolute;left:1584px;top:916px;width:25px;height:22px;border:1px solid #a8a8a8;background:#fff"></div>
<div style="position:absolute;left:1608px;top:916px;width:25px;height:22px;border:1px solid #a8a8a8;background:#fff"></div>
<div style="position:absolute;left:1632px;top:916px;width:25px;height:22px;border:1px solid #a8a8a8;background:#fff"></div>
<svg style="left:1567px;top:924px" width="11" height="7" viewBox="0 0 11 7"><path d="M1 0.5h9" stroke="#b4b4b4" stroke-width="1"/><path d="M1 6h9L5.5 1.5z" fill="#b4b4b4"/></svg>
<svg style="left:1591px;top:925px" width="11" height="6" viewBox="0 0 11 6"><path d="M1 5h9L5.5 0.5z" fill="#b4b4b4"/></svg>
<svg style="left:1615px;top:925px" width="11" height="6" viewBox="0 0 11 6"><path d="M1 0.5h9L5.5 5z" fill="#b4b4b4"/></svg>
<svg style="left:1639px;top:925px" width="11" height="7" viewBox="0 0 11 7"><path d="M1 0.5h9L5.5 5z" fill="#b4b4b4"/><path d="M1 5.9h9" stroke="#b4b4b4" stroke-width="1"/></svg>
<div style="position:absolute;left:6px;top:950px;width:1668px;height:1px;background:#a9a9a9"></div>
<div style="position:absolute;left:6px;top:951px;width:1668px;height:54px;background:#fff"></div>
<div class="t" style="left:61px;top:964px;font-size:13px;line-height:13px;color:#4d4d4d;font-style:italic;">Нажимайте на значок звездочка в истории, меню функций или в заголовках форм. Помеченные</div>
<div class="t" style="left:61px;top:980px;font-size:13px;line-height:13px;color:#4d4d4d;font-style:italic;">звездочкой элементы будут отображаться в этой панели.</div>
<div style="position:absolute;left:747px;top:951px;width:186px;height:54px;background:#e6e6e6;border-left:1px solid #c8c8c8;border-right:1px solid #c8c8c8"></div>
<svg style="left:752px;top:964px" width="26" height="26" viewBox="0 0 26 26"><circle cx="8.4" cy="7.4" r="2.4" fill="#4a4a4a"/><circle cx="8.4" cy="13.4" r="2.4" fill="#4a4a4a"/><circle cx="8.4" cy="19.4" r="2.4" fill="#4a4a4a"/><circle cx="14.45" cy="7.4" r="2.4" fill="#4a4a4a"/><circle cx="14.45" cy="13.4" r="2.4" fill="#4a4a4a"/><circle cx="14.45" cy="19.4" r="2.4" fill="#4a4a4a"/><circle cx="20.5" cy="7.4" r="2.4" fill="#4a4a4a"/><circle cx="20.5" cy="13.4" r="2.4" fill="#4a4a4a"/><circle cx="20.5" cy="19.4" r="2.4" fill="#4a4a4a"/></svg>
<svg style="left:0px;top:0px;overflow:visible" width="1" height="1"><polygon points="803.50,970.20 805.62,975.99 811.77,976.21 806.92,980.01 808.61,985.94 803.50,982.50 798.39,985.94 800.08,980.01 795.23,976.21 801.38,975.99" fill="#4a4a4a"/><polygon points="33.50,970.20 35.62,975.99 41.77,976.21 36.92,980.01 38.61,985.94 33.50,982.50 28.39,985.94 30.08,980.01 25.23,976.21 31.38,975.99" fill="#4a4a4a"/></svg>
<svg style="left:828px;top:964px" width="26" height="26" viewBox="0 0 26 26"><circle cx="7.5" cy="8.5" r="2" fill="none" stroke="#4a4a4a" stroke-width="1.6"/><circle cx="18.4" cy="18.4" r="2" fill="none" stroke="#4a4a4a" stroke-width="1.6"/><path d="M9.4 6.9H14.2a2.6 2.6 0 0 1 2.6 2.6V16.4" fill="none" stroke="#4a4a4a" stroke-width="1.7"/><path d="M9.2 10.4V16.8a3 3 0 0 0 3 3H16.4" fill="none" stroke="#4a4a4a" stroke-width="1.7"/></svg>
<svg style="left:864px;top:964px" width="26" height="26" viewBox="0 0 26 26"><circle cx="11.5" cy="11.5" r="4.6" fill="none" stroke="#4a4a4a" stroke-width="1.7"/><path d="M16.2 16.2l3.2 3.2" stroke="#4a4a4a" stroke-width="3"/></svg>
<svg style="left:902px;top:964px" width="26" height="26" viewBox="0 0 26 26"><path d="M7.7 17V12.2a4.7 5.2 0 0 1 9.4 0V17" fill="none" stroke="#4a4a4a" stroke-width="1.8"/><path d="M5.6 18.3H19.2" stroke="#4a4a4a" stroke-width="2" stroke-linecap="round"/><path d="M6.5 17.2l1.5-1M18.3 17.2l-1.5-1" stroke="#4a4a4a" stroke-width="1.5"/><path d="M10.9 5.9l1.5-1.6 1.5 1.6z" fill="#4a4a4a" stroke="#4a4a4a"/><path d="M10.8 19.3h3.2l-1.6 2.1z" fill="#4a4a4a"/></svg>
<svg style="left:948px;top:964px" width="26" height="26" viewBox="0 0 26 26"><circle cx="7.5" cy="8.5" r="2" fill="none" stroke="#4a4a4a" stroke-width="1.6"/><circle cx="18.4" cy="18.4" r="2" fill="none" stroke="#4a4a4a" stroke-width="1.6"/><path d="M9.4 6.9H14.2a2.6 2.6 0 0 1 2.6 2.6V16.4" fill="none" stroke="#4a4a4a" stroke-width="1.7"/><path d="M9.2 10.4V16.8a3 3 0 0 0 3 3H16.4" fill="none" stroke="#4a4a4a" stroke-width="1.7"/></svg>
<div class="t" style="left:988px;top:964px;font-size:13px;line-height:13px;color:#333;letter-spacing:-0.087px;">Регламент подготовки отчетности</div>
<div class="t" style="left:988px;top:980px;font-size:13px;line-height:13px;color:#333;letter-spacing:-0.113px;">0000-0011 от 15.06.2018 9:59:50</div>
<div class="t" style="left:1211px;top:964px;font-size:13px;line-height:13px;color:#333;letter-spacing:-0.087px;">Регламент подготовки отчетности</div>
<div class="t" style="left:1434px;top:964px;font-size:13px;line-height:13px;color:#333;letter-spacing:-0.213px;">Отчет организации</div>
<div style="position:absolute;left:740px;top:-20px;width:40px;height:40px;border-radius:50%;background:radial-gradient(circle,rgba(255,248,190,0.55) 0%,rgba(250,230,120,0.6) 75%,rgba(240,210,90,0.7) 100%)"></div>
</body></html>
